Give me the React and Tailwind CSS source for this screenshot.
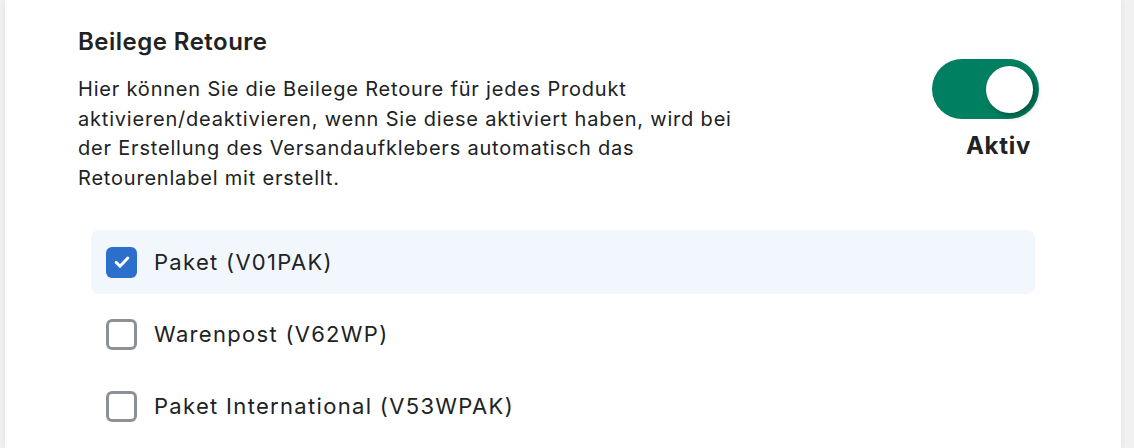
import { useState } from "react";

const services = [
  { id: "V01PAK", label: "Paket (V01PAK)" },
  { id: "V62WP", label: "Warenpost (V62WP)" },
  { id: "V53WPAK", label: "Paket International (V53WPAK)" },
];

function Checkbox({ checked }) {
  if (checked) {
    return (
      <span className="flex h-[31px] w-[31px] shrink-0 items-center justify-center rounded-[6px] bg-[#2c6ecb]">
        <svg width="20" height="20" viewBox="0 0 20 20" fill="none">
          <path
            d="M4.2 10.4l3.8 3.8 7.8-8.2"
            stroke="white"
            strokeWidth="3"
            strokeLinecap="round"
            strokeLinejoin="round"
          />
        </svg>
      </span>
    );
  }
  return (
    <span className="h-[31px] w-[31px] shrink-0 rounded-[6px] border-[3px] border-[#8c9196] bg-white" />
  );
}

export default function App() {
  const [active, setActive] = useState(true);
  const [selected, setSelected] = useState(["V01PAK"]);

  const toggleService = (id) => {
    setSelected((prev) =>
      prev.includes(id) ? prev.filter((s) => s !== id) : [...prev, id]
    );
  };

  return (
    <div className="flex min-h-screen bg-[#f1f1f1] pl-[5px] font-['Inter',sans-serif] text-[#202223]">
      <div className="w-[1116px] bg-white pl-[73px] pr-[82px] pt-[26px] shadow-[0_0_6px_rgba(0,0,0,0.08)]">
        {/* Header */}
        <div className="flex items-center justify-between">
          <div className="w-[680px]">
            <h2 className="text-[24px] font-semibold leading-[32px] tracking-[0.02em]">
              Beilege Retoure
            </h2>
            <p className="mt-[17px] text-[20px] leading-[29.5px] tracking-[0.04em]">
              Hier können Sie die Beilege Retoure für jedes Produkt
              aktivieren/deaktivieren, wenn Sie diese aktiviert haben, wird bei
              der Erstellung des Versandaufklebers automatisch das
              Retourenlabel mit erstellt.
            </p>
          </div>
          <div className="flex flex-col items-end">
            <button
              onClick={() => setActive(!active)}
              className={`relative h-[60px] w-[107px] rounded-full ${
                active ? "bg-[#008060]" : "bg-[#babec3]"
              }`}
            >
              <span
                className={`absolute top-[7px] h-[47px] w-[47px] rounded-full bg-white shadow-[3px_3px_6px_rgba(0,0,0,0.35)] ${
                  active ? "right-[6px]" : "left-[6px]"
                }`}
              />
            </button>
            <span className="mr-[8px] mt-[12px] text-[24px] font-bold leading-[30px] tracking-[0.03em]">
              {active ? "Aktiv" : "Inaktiv"}
            </span>
          </div>
        </div>

        {/* Services */}
        <div className="ml-[13px] mr-[4px] mt-[37px] flex flex-col gap-[8px]">
          {services.map((s) => {
            const checked = selected.includes(s.id);
            return (
              <label
                key={s.id}
                onClick={() => toggleService(s.id)}
                className={`flex h-[64px] cursor-pointer items-center gap-[17px] rounded-[8px] pl-[15px] ${
                  checked ? "bg-[#f2f7fe]" : ""
                }`}
              >
                <Checkbox checked={checked} />
                <span className="text-[22px] leading-[28px] tracking-[0.06em]">
                  {s.label}
                </span>
              </label>
            );
          })}
        </div>
      </div>
    </div>
  );
}
